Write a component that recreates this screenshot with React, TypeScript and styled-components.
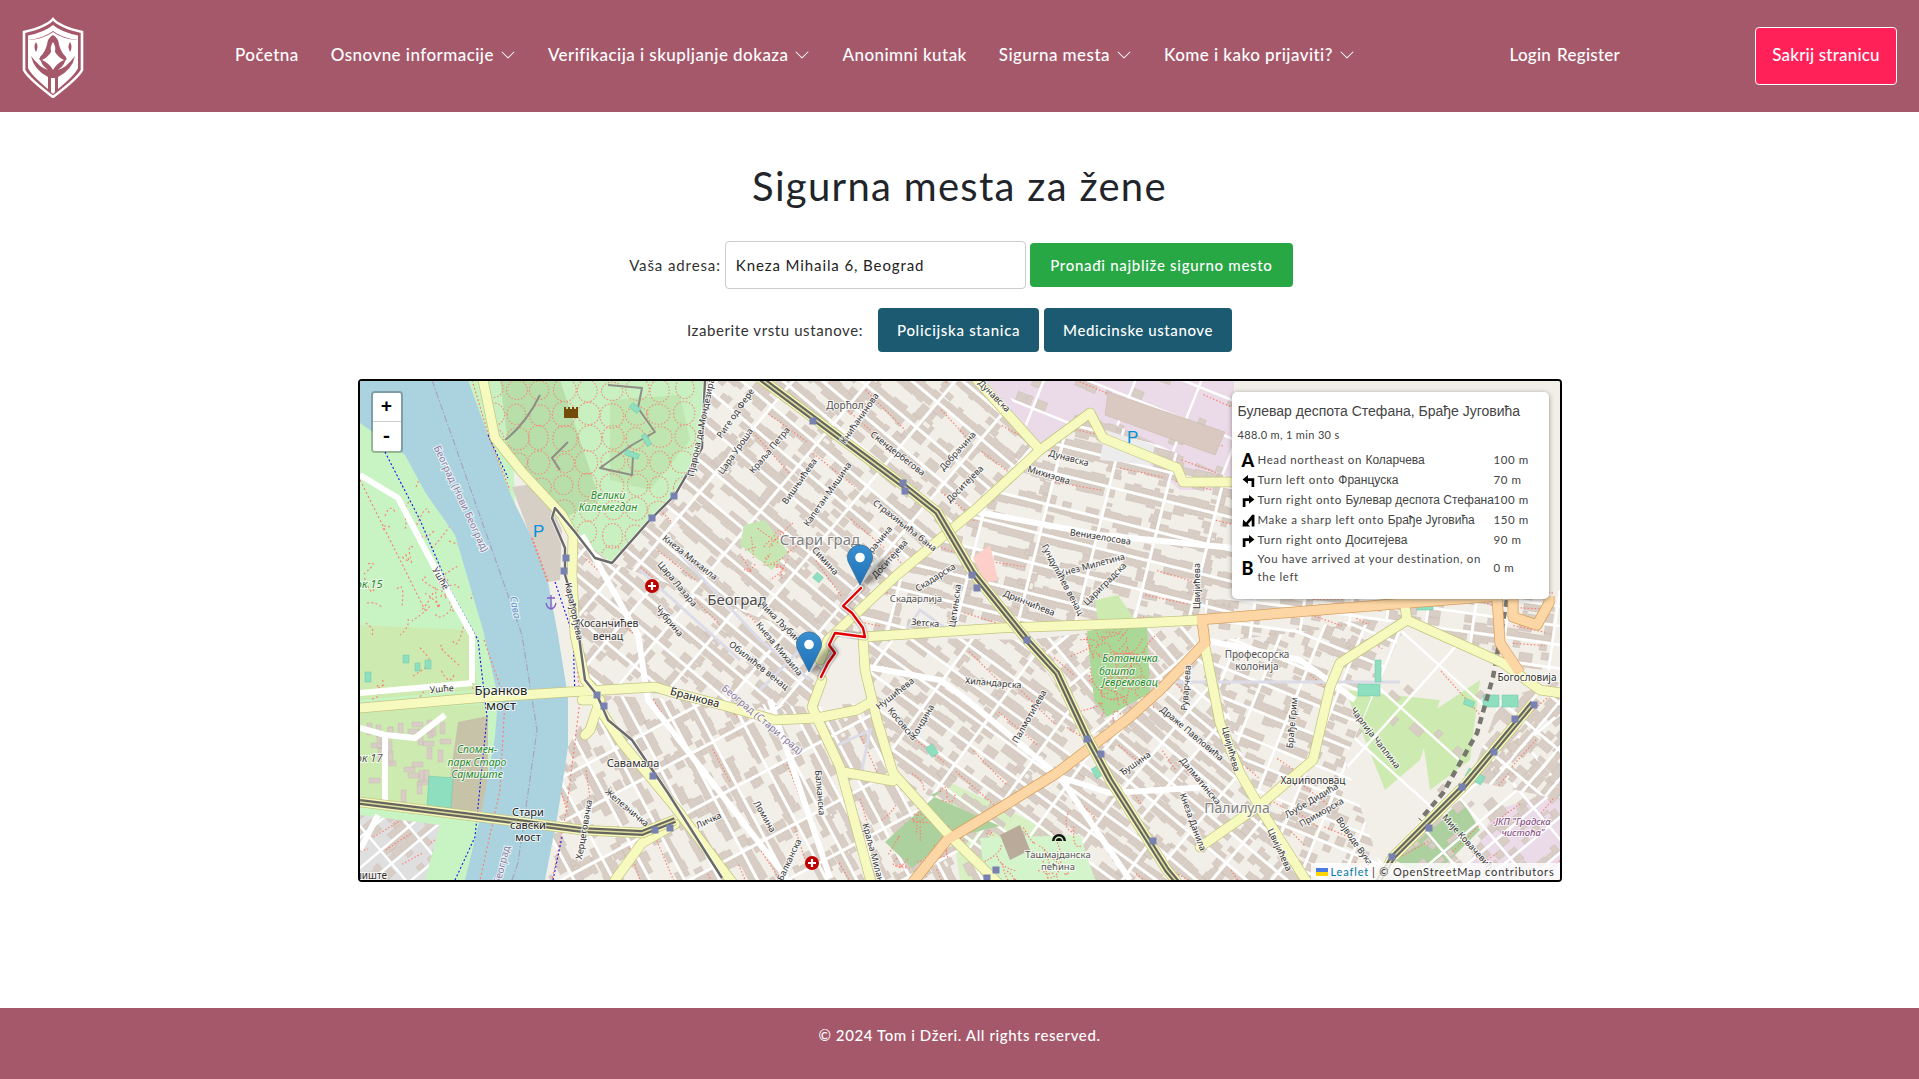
import React from 'react';
import styled, { createGlobalStyle } from 'styled-components';

const ROSE = '#a6586b';
const BODY_FONT = '"Lato", "Liberation Sans", sans-serif';
const CYR_FONT = '"Liberation Sans", sans-serif';

type Pt = [number, number];

const toPath = (pts: Pt[], close = false) =>
  'M' + pts.map(p => `${p[0]} ${p[1]}`).join('L') + (close ? 'Z' : '');

const rng = (seed: number) => () => {
  seed = (seed + 0x6d2b79f5) | 0;
  let t = Math.imul(seed ^ (seed >>> 15), 1 | seed);
  t = (t + Math.imul(t ^ (t >>> 7), 61 | t)) ^ t;
  return ((t ^ (t >>> 14)) >>> 0) / 4294967296;
};

interface District {
  poly: Pt[];
  angle: number;
  cw: number;
  ch: number;
  seed: number;
  fill?: number;
}

// one district of the city: a rotated street grid with buildings along the block edges
const buildDistrict = ({ poly, angle, cw, ch, seed, fill = 1 }: District) => {
  const r = rng(seed);
  const xs = poly.map(p => p[0]);
  const ys = poly.map(p => p[1]);
  const cx = (Math.min(...xs) + Math.max(...xs)) / 2;
  const cy = (Math.min(...ys) + Math.max(...ys)) / 2;
  const R = Math.hypot(Math.max(...xs) - cx, Math.max(...ys) - cy) + 30;
  const c = Math.cos((angle * Math.PI) / 180);
  const s = Math.sin((angle * Math.PI) / 180);
  const at = (u: number, v: number) =>
    `${(cx + u * c - v * s).toFixed(1)} ${(cy + u * s + v * c).toFixed(1)}`;
  const rect = (u0: number, v0: number, u1: number, v1: number) =>
    `M${at(u0, v0)}L${at(u1, v0)}L${at(u1, v1)}L${at(u0, v1)}Z`;

  const cuts = (size: number) => {
    const out: number[] = [];
    for (let p = -R; p < R; p += size * (0.75 + r() * 0.5)) out.push(p);
    return out;
  };
  const us = cuts(cw);
  const vs = cuts(ch);

  let buildings = '';
  let streets = '';
  let dots = '';
  us.forEach(u => { streets += `M${at(u, -R)}L${at(u, R)}`; });
  vs.forEach(v => { streets += `M${at(-R, v)}L${at(R, v)}`; });

  for (let i = 0; i < us.length - 1; i++) {
    for (let j = 0; j < vs.length - 1; j++) {
      const u0 = us[i] + 2;
      const u1 = us[i + 1] - 2;
      const v0 = vs[j] + 2;
      const v1 = vs[j + 1] - 2;
      for (let u = u0; u < u1 - 3; ) {
        const len = Math.min(4 + r() * 10, u1 - u);
        if (r() < 0.88 * fill) buildings += rect(u, v0, u + len, v0 + 4 + r() * 5);
        if (r() < 0.88 * fill) buildings += rect(u, v1, u + len, v1 - 4 - r() * 5);
        u += len + 0.8;
      }
      for (let v = v0 + 8; v < v1 - 10; ) {
        const len = 3 + r() * 6;
        if (r() < 0.75 * fill) buildings += rect(u0, v, u0 + 4 + r() * 5, v + len);
        if (r() < 0.75 * fill) buildings += rect(u1, v, u1 - 4 - r() * 5, v + len);
        v += len + 0.8;
      }
      if (r() < 0.3) {
        dots += `M${at(u0 + r() * 8, v0 + r() * 8)}L${at(u1 - r() * 8, v0 + r() * 12)}`;
      }
    }
  }
  return { poly, buildings, streets, dots };
};

const districts = [
  { poly: [[705, 380], [985, 380], [1040, 450], [977, 508], [897, 575], [820, 640], [612, 563], [675, 495], [702, 448]], angle: 40, cw: 56, ch: 30, seed: 11 },
  { poly: [[612, 563], [820, 640], [822, 680], [817, 718], [675, 693], [597, 695], [575, 640], [575, 535]], angle: 40, cw: 44, ch: 32, seed: 22 },
  { poly: [[597, 695], [812, 707], [871, 702], [893, 781], [947, 833], [997, 882], [545, 880], [568, 747]], angle: 62, cw: 52, ch: 30, seed: 33, fill: 0.9 },
  { poly: [[897, 575], [977, 508], [1040, 450], [1090, 413], [1234, 480], [1234, 622], [867, 637], [820, 640]], angle: 14, cw: 56, ch: 30, seed: 44 },
  { poly: [[867, 637], [1027, 640], [1087, 737], [1177, 882], [997, 882], [893, 773], [870, 700]], angle: 36, cw: 54, ch: 30, seed: 55 },
  { poly: [[1027, 640], [1197, 620], [1205, 643], [1130, 717], [1087, 737]], angle: 50, cw: 46, ch: 30, seed: 66 },
  { poly: [[1087, 737], [1130, 717], [1205, 643], [1257, 800], [1307, 882], [1177, 882]], angle: 40, cw: 40, ch: 26, seed: 77 },
  { poly: [[1205, 643], [1340, 622], [1407, 620], [1345, 760], [1385, 882], [1307, 882], [1257, 803]], angle: 22, cw: 40, ch: 28, seed: 88, fill: 0.72 },
  { poly: [[1407, 620], [1503, 665], [1440, 800], [1385, 882], [1345, 760]], angle: 42, cw: 74, ch: 60, seed: 91, fill: 0.16 },
  { poly: [[1440, 800], [1561, 700], [1561, 880], [1385, 880]], angle: -40, cw: 46, ch: 28, seed: 99, fill: 0.55 },
  { poly: [[1205, 600], [1561, 590], [1561, 672], [1503, 665], [1407, 620], [1205, 643]], angle: 8, cw: 42, ch: 22, seed: 110, fill: 0.6 },
  { poly: [[1500, 700], [1561, 680], [1561, 800], [1470, 780]], angle: -50, cw: 40, ch: 26, seed: 121 },
  { poly: [[360, 815], [440, 825], [425, 880], [360, 880]], angle: -40, cw: 34, ch: 22, seed: 132, fill: 0.7 },
  { poly: [[1090, 413], [1234, 480], [1234, 380], [1000, 380], [1040, 450]], angle: 22, cw: 70, ch: 46, seed: 154, fill: 0.3 },
].map(d => buildDistrict(d as District));

// red dotted footpaths scattered through the parks
const parkPaths = (seed: number, x0: number, y0: number, x1: number, y1: number, n: number) => {
  const r = rng(seed);
  let d = '';
  for (let i = 0; i < n; i++) {
    const x = x0 + r() * (x1 - x0);
    const y = y0 + r() * (y1 - y0);
    d += `M${x.toFixed(0)} ${y.toFixed(0)}q${(r() * 30 - 15).toFixed(0)} ${(r() * 30 - 15).toFixed(0)} ${(r() * 44 - 22).toFixed(0)} ${(r() * 44 - 22).toFixed(0)}`;
  }
  return d;
};

// the round lawns of Kalemegdan side by side, each ringed by a dotted path
const parkLoops = (seed: number, x0: number, y0: number, x1: number, y1: number, step: number) => {
  const r = rng(seed);
  let d = '';
  for (let y = y0; y < y1; y += step) {
    for (let x = x0; x < x1; x += step) {
      const cx = x + r() * 4;
      const cy = y + r() * 4;
      const rx = step * (0.38 + r() * 0.12);
      const ry = step * (0.38 + r() * 0.12);
      d += `M${(cx - rx).toFixed(1)} ${cy.toFixed(1)}a${rx.toFixed(1)} ${ry.toFixed(1)} 0 1 0 ${(rx * 2).toFixed(1)} 0a${rx.toFixed(1)} ${ry.toFixed(1)} 0 1 0 ${(-rx * 2).toFixed(1)} 0Z`;
    }
  }
  return d;
};

// scattered low buildings on the grass of Staro Sajmiste
const sajmisteHuts = (() => {
  const r = rng(17);
  let d = '';
  for (let i = 0; i < 34; i++) {
    const x = 362 + r() * 82;
    const y = 718 + r() * 78;
    const tall = r() > 0.5;
    d += `M${x.toFixed(0)} ${y.toFixed(0)}h${tall ? 5 : 11}v${tall ? 12 : 5}h${tall ? -5 : -11}Z`;
  }
  return d;
})();

const kalemegdan: Pt[] = [[483, 380], [705, 380], [702, 448], [675, 495], [612, 563], [575, 535], [522, 472], [495, 438]];
const river: Pt[] = [[360, 380], [468, 380], [488, 435], [512, 498], [532, 538], [548, 582], [558, 635], [568, 697], [568, 747], [558, 813], [545, 880], [465, 880], [482, 810], [495, 737], [498, 697], [483, 630], [455, 535], [425, 492], [405, 455], [360, 423]];
const pinkLand: Pt[] = [[985, 380], [1234, 380], [1234, 490], [1180, 490], [1090, 413], [1040, 450]];
const botanical: Pt[] = [[1087, 631], [1147, 622], [1150, 693], [1107, 717], [1094, 700]];

const yellowRoads: Pt[][] = [
  [[483, 380], [495, 438], [522, 472], [562, 515], [573, 535], [572, 575], [575, 635], [585, 680], [597, 694]],
  [[360, 708], [475, 698], [568, 692], [655, 687], [675, 693], [722, 705], [775, 720], [817, 718], [857, 710], [871, 702]],
  [[822, 680], [812, 707], [840, 767], [867, 867], [871, 882]],
  [[863, 637], [865, 670], [877, 720], [893, 773], [947, 833], [997, 882]],
  [[843, 772], [893, 781]],
  [[820, 660], [828, 640], [897, 575], [977, 508], [1040, 450], [1090, 413], [1103, 438], [1177, 468], [1183, 482], [1234, 482]],
  [[977, 380], [1040, 450]],
  [[863, 637], [1000, 628], [1140, 623], [1200, 620]],
  [[582, 700], [600, 700], [590, 730], [585, 735]],
  [[597, 705], [622, 743], [675, 807], [732, 882]],
  [[615, 880], [642, 843], [675, 824]],
  [[1205, 647], [1220, 723], [1240, 773], [1263, 813], [1307, 882]],
  [[1200, 847], [1260, 805], [1313, 760], [1330, 687], [1340, 663], [1407, 620], [1503, 663], [1540, 690], [1561, 693]],
  [[1407, 620], [1404, 600]],
];

const orangeRoads: Pt[][] = [
  [[1197, 620], [1407, 603], [1497, 596]],
  [[1202, 620], [1205, 643], [1160, 690], [1130, 717], [1057, 773], [997, 810], [947, 840], [913, 882]],
  [[1497, 596], [1500, 643], [1520, 673]],
  [[1513, 596], [1513, 617], [1537, 625], [1549, 603], [1549, 596]],
];

const railLines: Pt[][] = [
  [[760, 378], [903, 485], [937, 512], [973, 573], [1027, 640], [1057, 673], [1087, 737], [1110, 780], [1167, 870], [1177, 882]],
  [[360, 802], [465, 815], [582, 830], [642, 833], [675, 820]],
  [[1533, 703], [1463, 787], [1393, 857], [1378, 882]],
];

const tramLine: Pt[] = [[705, 380], [702, 448], [675, 495], [648, 522], [612, 563], [595, 558], [575, 532], [555, 508], [552, 518], [565, 548], [565, 575], [575, 608], [585, 680], [597, 695], [608, 720], [632, 740], [668, 793], [722, 878]];

const wideStreets: Pt[][] = [
  [[977, 512], [1100, 535], [1234, 548]],
  [[868, 667], [940, 680], [967, 700], [1060, 777], [1110, 793], [1210, 787]],
  [[582, 535], [638, 635], [648, 700], [775, 863], [790, 882]],
  [[360, 693], [472, 683]],
  [[360, 475], [398, 498], [435, 568], [472, 635], [472, 683]],
  [[1060, 777], [1130, 880]],
  [[770, 700], [830, 878]],
  [[1205, 640], [1300, 660], [1355, 700]],
  [[360, 850], [378, 815]],
  [[360, 728], [385, 735], [415, 738], [445, 715]],
  [[385, 735], [385, 800]],
];

const lilacWalks: Pt[][] = [
  [[665, 538], [760, 640], [810, 680]],
  [[640, 570], [740, 660]],
  [[800, 650], [760, 690]],
  [[905, 632], [920, 610], [945, 628]],
  [[838, 745], [870, 730], [862, 770]],
  [[1170, 682], [1400, 682]],
];

const stops: Pt[] = [[674, 496], [652, 518], [566, 558], [564, 571], [813, 421], [903, 483], [905, 491], [972, 575], [977, 588], [1027, 640], [1087, 739], [1101, 754], [1153, 841], [996, 870], [987, 878], [597, 695], [604, 706], [653, 776], [655, 830], [670, 828], [1534, 705], [1515, 719], [1494, 752], [1462, 787], [1429, 828], [1392, 857]];

const teal: [number, number, number, number, number][] = [
  [428, 777, 24, 30, 4], [415, 663, 5, 8, 0], [403, 655, 6, 8, 0], [425, 660, 6, 9, 0], [365, 672, 6, 10, 0],
  [814, 574, 8, 7, 40], [630, 405, 10, 6, 40], [625, 452, 14, 5, 20], [644, 434, 5, 12, -30], [1358, 684, 22, 12, 0], [1375, 660, 6, 22, 0], [1417, 598, 16, 12, 0],
  [1483, 695, 16, 12, 0], [1502, 695, 16, 12, 0], [1466, 772, 18, 9, 30], [928, 745, 8, 11, -35], [1093, 765, 14, 11, -30], [1464, 700, 10, 6, 20],
];

interface LabelData {
  t: string;
  x: number;
  y: number;
  a?: number;
  s?: number;
  c?: string;
  i?: boolean;
}

const STREET = '#333';
const AREA = '#555';
const GREEN = '#1f8a2a';
const ADMIN = '#8a7aa0';

const labels: LabelData[] = [
  { t: 'Стари град', x: 820, y: 545, s: 15, c: '#808080' },
  { t: 'Београд', x: 737, y: 605, s: 15, c: '#4a4a4a' },
  { t: 'Бранков', x: 501, y: 695, s: 13, c: '#222' },
  { t: 'мост', x: 501, y: 710, s: 13, c: '#222' },
  { t: 'Стари', x: 528, y: 816, s: 11, c: '#222' },
  { t: 'савски', x: 528, y: 829, s: 11, c: '#222' },
  { t: 'мост', x: 528, y: 841, s: 11, c: '#222' },
  { t: 'Бранкова', x: 694, y: 701, a: 15, s: 11, c: '#222' },
  { t: 'Савамала', x: 633, y: 767, s: 11, c: '#333' },
  { t: 'Косанчићев', x: 608, y: 627, s: 10.5, c: '#333' },
  { t: 'венац', x: 608, y: 640, s: 10.5, c: '#333' },
  { t: 'Велики', x: 608, y: 499, s: 10.5, c: GREEN, i: true },
  { t: 'Калемегдан', x: 608, y: 511, s: 10.5, c: GREEN, i: true },
  { t: 'Спомен-', x: 477, y: 753, s: 10.5, c: GREEN, i: true },
  { t: 'парк Старо', x: 477, y: 766, s: 10.5, c: GREEN, i: true },
  { t: 'Сајмиште', x: 477, y: 778, s: 10.5, c: GREEN, i: true },
  { t: 'блок 15', x: 363, y: 588, s: 11, c: GREEN, i: true },
  { t: 'блок 17', x: 363, y: 762, s: 11, c: '#555', i: true },
  { t: 'Ушће', x: 438, y: 580, a: 60, s: 8.5 },
  { t: 'Ушће', x: 442, y: 692, a: -5, s: 8.5 },
  { t: 'Београд (Нови Београд)', x: 458, y: 500, a: 65, s: 10, c: ADMIN },
  { t: 'Сава', x: 512, y: 608, a: 80, s: 10, c: '#5a90c8', i: true },
  { t: 'Карађорђева', x: 571, y: 612, a: 78, s: 9 },
  { t: 'Кнеза Михаила', x: 688, y: 560, a: 38, s: 8.5 },
  { t: 'Цара Лазара', x: 675, y: 586, a: 50, s: 8.5 },
  { t: 'Чубрина', x: 667, y: 623, a: 50, s: 8.5 },
  { t: 'Пјарона де Мондезира', x: 704, y: 428, a: -78, s: 8.5 },
  { t: 'Риге од Фере', x: 738, y: 415, a: -55, s: 8.5 },
  { t: 'Цара Уроша', x: 738, y: 453, a: -55, s: 8.5 },
  { t: 'Дорћол', x: 845, y: 409, s: 10, c: AREA },
  { t: 'Краља Петра', x: 772, y: 452, a: -50, s: 8.5 },
  { t: 'Вишњићева', x: 802, y: 483, a: -55, s: 8.5 },
  { t: 'Капетан Мишина', x: 830, y: 496, a: -55, s: 8.5 },
  { t: 'Книћанинова', x: 862, y: 420, a: -55, s: 8.5 },
  { t: 'Скендербегова', x: 896, y: 456, a: 38, s: 8.5 },
  { t: 'Добрачина', x: 960, y: 453, a: -48, s: 8.5 },
  { t: 'Дунавска', x: 992, y: 398, a: 45, s: 8.5 },
  { t: 'Дунавска', x: 1068, y: 461, a: 15, s: 8.5 },
  { t: 'Михизова', x: 1048, y: 478, a: 17, s: 8.5 },
  { t: 'Доситејева', x: 967, y: 486, a: -45, s: 8.5 },
  { t: 'Страхињића бана', x: 903, y: 528, a: 38, s: 8.5 },
  { t: 'Добрачина', x: 877, y: 548, a: -50, s: 8.5 },
  { t: 'Доситејева', x: 892, y: 561, a: -48, s: 8.5 },
  { t: 'Венизелосова', x: 1100, y: 540, a: 9, s: 9 },
  { t: 'Кнез Милетина', x: 1093, y: 568, a: -15, s: 8.5 },
  { t: 'Гундулићев венац', x: 1060, y: 581, a: 62, s: 8.5 },
  { t: 'Цариградска', x: 1107, y: 586, a: -45, s: 8.5 },
  { t: 'Дринчићева', x: 1028, y: 606, a: 22, s: 8.5 },
  { t: 'Скадарска', x: 937, y: 580, a: -32, s: 8.5 },
  { t: 'Скадарлија', x: 916, y: 602, s: 9.5, c: AREA },
  { t: 'Зетска', x: 925, y: 626, a: 5, s: 8.5 },
  { t: 'Цетињска', x: 958, y: 606, a: -82, s: 8.5 },
  { t: 'Хиландарска', x: 993, y: 686, a: 5, s: 8.5 },
  { t: 'Нушићева', x: 897, y: 696, a: -38, s: 8.5 },
  { t: 'Косовска', x: 900, y: 726, a: 50, s: 8.5 },
  { t: 'Кондина', x: 925, y: 723, a: -60, s: 8.5 },
  { t: 'Палмотићева', x: 1032, y: 718, a: -60, s: 8.5 },
  { t: 'Симина', x: 823, y: 563, a: 48, s: 8.5 },
  { t: 'Чика Љубина', x: 780, y: 626, a: 45, s: 8.5 },
  { t: 'Кнеза Михаила', x: 777, y: 651, a: 50, s: 8.5 },
  { t: 'Обилићев венац', x: 757, y: 668, a: 38, s: 8.5 },
  { t: 'Ботаничка', x: 1130, y: 662, s: 10.5, c: GREEN, i: true },
  { t: 'башта', x: 1117, y: 675, s: 10.5, c: GREEN, i: true },
  { t: 'Јевремовац', x: 1130, y: 686, s: 10.5, c: GREEN, i: true },
  { t: 'Балканска', x: 817, y: 793, a: 85, s: 8.5 },
  { t: 'Балканска', x: 792, y: 861, a: -65, s: 8.5 },
  { t: 'Краља Милана', x: 871, y: 856, a: 75, s: 9 },
  { t: 'Ташмајданска', x: 1058, y: 858, s: 9.5, c: AREA },
  { t: 'пећина', x: 1058, y: 870, s: 9.5, c: AREA },
  { t: 'Ђушина', x: 1137, y: 766, a: -35, s: 8.5 },
  { t: 'Драже Павловића', x: 1190, y: 736, a: 40, s: 8.5 },
  { t: 'Далматинска', x: 1198, y: 783, a: 50, s: 8.5 },
  { t: 'Кнеза Данила', x: 1190, y: 823, a: 70, s: 8.5 },
  { t: 'Професорска', x: 1257, y: 658, s: 10, c: AREA },
  { t: 'колонија', x: 1257, y: 670, s: 10, c: AREA },
  { t: 'Руварчева', x: 1189, y: 688, a: -85, s: 8.5 },
  { t: 'Цвијићева', x: 1228, y: 750, a: 75, s: 9 },
  { t: 'Цвијићева', x: 1200, y: 586, a: -90, s: 8.5 },
  { t: 'Брађе Грим', x: 1295, y: 723, a: -85, s: 8.5 },
  { t: 'Чарлија Чаплина', x: 1373, y: 740, a: 52, s: 8.5 },
  { t: 'Хаџипоповац', x: 1313, y: 784, s: 10, c: '#333' },
  { t: 'Богословија', x: 1527, y: 681, s: 10, c: '#333' },
  { t: 'Палилула', x: 1237, y: 813, s: 14, c: '#808080' },
  { t: 'Цвијићева', x: 1277, y: 851, a: 65, s: 9 },
  { t: 'Љубе Дидића', x: 1313, y: 803, a: -30, s: 8.5 },
  { t: 'Приморска', x: 1323, y: 815, a: -30, s: 8.5 },
  { t: 'Војводе Вука', x: 1352, y: 843, a: 55, s: 8.5 },
  { t: 'Мије Ковачевића', x: 1467, y: 846, a: 48, s: 8.5 },
  { t: 'ЈКП "Градска', x: 1523, y: 825, s: 9.5, c: '#7a3f7a', i: true },
  { t: 'чистоћа"', x: 1523, y: 836, s: 9.5, c: '#7a3f7a', i: true },
  { t: 'Железничка', x: 625, y: 810, a: 40, s: 8.5 },
  { t: 'Херцеговачка', x: 587, y: 830, a: -80, s: 8.5 },
  { t: 'Личка', x: 710, y: 823, a: -25, s: 8.5 },
  { t: 'Ломина', x: 762, y: 818, a: 60, s: 8.5 },
  { t: 'шиште', x: 370, y: 879, s: 10, c: '#333' },
  { t: 'Београд (Стари град)', x: 760, y: 722, a: 40, s: 10, c: ADMIN },
  { t: 'Београд', x: 505, y: 866, a: -75, s: 10, c: ADMIN },
];

const GlobalStyle = createGlobalStyle`
  html, body { margin: 0; padding: 0; background: #fff; }
  body { font-family: ${BODY_FONT}; color: #212529; }
  * { box-sizing: border-box; }
`;

const Page = styled.div`
  min-height: 1079px;
  display: flex;
  flex-direction: column;
`;

const NavBar = styled.header`
  height: 112px;
  flex: none;
  background: ${ROSE};
  display: flex;
  align-items: center;
  padding: 0 22px 0 20px;
  color: #fff;
`;

const LogoMark = styled.svg`
  width: 70px;
  height: 84px;
  flex: none;
`;

const NavLinks = styled.nav`
  display: flex;
  align-items: center;
  gap: 32px;
  margin-left: 145px;
  padding-bottom: 3px;
`;

const NavLink = styled.a`
  display: inline-flex;
  align-items: center;
  gap: 6px;
  font-size: 17px;
  letter-spacing: 0.45px;
  font-weight: 500;
  white-space: nowrap;
  color: #fff;
`;

const Chevron = styled.svg`
  width: 16px;
  height: 16px;
  fill: #fff;
  flex: none;
`;

const AuthLinks = styled.div`
  margin-left: auto;
  padding-bottom: 3px;
  display: flex;
  gap: 6px;
  font-size: 17px;
  letter-spacing: 0.25px;
  font-weight: 500;
`;

const HideButton = styled.button`
  width: 142px;
  height: 58px;
  margin-left: 135px;
  padding: 0 0 3px;
  background: #ff2158;
  border: 1px solid #fff;
  border-radius: 4px;
  color: #fff;
  font: 500 17px ${BODY_FONT};
  letter-spacing: 0.2px;
`;

const Main = styled.main`
  flex: 1;
  display: flex;
  flex-direction: column;
  align-items: center;
`;

const Title = styled.h1`
  margin: 52px 0 0;
  height: 45px;
  line-height: 45px;
  font-size: 40px;
  font-weight: 400;
  letter-spacing: 1.3px;
  color: #212529;
`;

const FormRow = styled.div<{ $top: number; $shift?: number }>`
  display: flex;
  align-items: center;
  justify-content: center;
  margin-top: ${p => p.$top}px;
  padding-left: ${p => p.$shift ?? 0}px;
  height: 48px;
  font-size: 15px;
`;

const FieldLabel = styled.label<{ $gap: number; $spacing: number }>`
  margin-right: ${p => p.$gap}px;
  letter-spacing: ${p => p.$spacing}px;
  color: #333;
  white-space: nowrap;
`;

const AddressInput = styled.input`
  width: 301px;
  height: 48px;
  border: 1px solid #ccc;
  border-radius: 4px;
  padding: 0 10px;
  font: 400 15px ${BODY_FONT};
  letter-spacing: 0.9px;
  color: #222;
  outline: none;
`;

const ActionButton = styled.button<{ $color: string; $width: number; $gap: number; $spacing: number }>`
  width: ${p => p.$width}px;
  height: 44px;
  margin-left: ${p => p.$gap}px;
  padding: 0;
  background: ${p => p.$color};
  border: 0;
  border-radius: 4px;
  color: #fff;
  font: 500 15px ${BODY_FONT};
  letter-spacing: ${p => p.$spacing}px;
`;

const MapFrame = styled.div`
  position: relative;
  width: 1204px;
  height: 503px;
  margin-top: 25px;
  border: 2px solid #000;
  border-radius: 4px;
  overflow: hidden;
  background: #f2efe9;
`;

const MapCanvas = styled.svg`
  display: block;
  width: 1200px;
  height: 499px;
`;

const MapLabel = styled.text<{ $size: number; $color: string; $italic?: boolean }>`
  font-family: "Noto Sans", "DejaVu Sans", sans-serif;
  font-size: ${p => p.$size}px;
  font-style: ${p => (p.$italic ? 'italic' : 'normal')};
  fill: ${p => p.$color};
  stroke: rgba(255, 255, 255, 0.75);
  stroke-width: 2px;
  paint-order: stroke;
  text-anchor: middle;
`;

const ZoomBar = styled.div`
  position: absolute;
  left: 11px;
  top: 10px;
  width: 32px;
  border: 2px solid rgba(0, 0, 0, 0.25);
  border-radius: 4px;
  background-clip: padding-box;
`;

const ZoomButton = styled.a<{ $first?: boolean }>`
  display: flex;
  align-items: center;
  justify-content: center;
  width: 28px;
  height: 29px;
  background: #fff;
  color: #000;
  font: bold 19px "Liberation Mono", monospace;
  border-bottom: ${p => (p.$first ? '1px solid #ccc' : '0')};
  border-radius: ${p => (p.$first ? '2px 2px 0 0' : '0 0 2px 2px')};
`;

const RoutePanel = styled.aside`
  position: absolute;
  left: 872px;
  top: 11px;
  width: 317px;
  height: 207px;
  padding: 9px 6px 0;
  background: #fff;
  border-radius: 5px;
  box-shadow: 0 1px 5px rgba(0, 0, 0, 0.4);
  color: #444;
`;

const RouteTitle = styled.div`
  font: 400 14px/20px ${CYR_FONT};
  color: #444;
  white-space: nowrap;
`;

const RouteSummary = styled.div`
  margin-top: 7px;
  font-size: 11px;
  line-height: 14px;
  letter-spacing: 0.35px;
`;

const RouteRows = styled.div`
  margin-top: 8px;
  display: grid;
  grid-template-columns: 20px 236px 1fr;
  grid-auto-rows: minmax(20px, auto);
  align-items: center;
  font-size: 11.5px;
  line-height: 18px;
  letter-spacing: 0.6px;
`;

const Cyr = styled.span`
  font-family: ${CYR_FONT};
  letter-spacing: 0;
  font-size: 12px;
`;

const StepLetter = styled.span`
  font: 900 18px/18px "Lato", sans-serif;
  color: #000;
  padding-left: 4px;
`;

const StepIcon = styled.svg`
  width: 13px;
  height: 13px;
  margin-left: 4px;
  display: block;
`;

const StepText = styled.span<{ $clip?: boolean }>`
  white-space: ${p => (p.$clip ? 'nowrap' : 'normal')};
`;

const StepDistance = styled.span`
  letter-spacing: 0.6px;
`;

const Attribution = styled.div`
  position: absolute;
  right: 0;
  bottom: 0;
  height: 17px;
  display: flex;
  align-items: center;
  gap: 3px;
  padding: 0 5px;
  background: rgba(255, 255, 255, 0.8);
  font-size: 11px;
  letter-spacing: 0.85px;
  color: #333;
  white-space: nowrap;
`;

const LeafletLink = styled.a`
  color: #0078a8;
`;

const Footer = styled.footer`
  height: 71px;
  flex: none;
  background: ${ROSE};
  color: #fff;
  display: flex;
  justify-content: center;
  padding-top: 18px;
  font-size: 15px;
  font-weight: 500;
  letter-spacing: 0.6px;
`;

const Logo = () => (
  <LogoMark viewBox="20 12 70 84">
    <path d="M53 17 Q60 25 82 30 L82 68 Q78 76 53 95 Q28 76 24 68 L24 30 Q46 25 53 17Z" fill="none" stroke="#fff" strokeWidth="2.6" />
    <path d="M53 23 Q61 30 78 33.5 L78 38 Q62 36 53 29 Q44 36 28 38 L28 33.5 Q45 30 53 23Z" fill="#fff" />
    <path d="M28 38 Q44 37 53 30 Q62 37 78 38 L78 66 Q75 73 58 87 L58 75 Q72 68 75 54 Q66 66 58 68 Q66 62 66 55 Q60 50 58 38 Q53 32 48 38 Q46 50 40 55 Q40 62 48 68 Q40 66 31 54 Q34 68 48 75 L48 87 Q31 73 28 66Z" fill="#fff" />
    <path d="M36 40 Q39 44 36 50 Q33 45 36 40Z M70 40 Q73 45 70 50 Q67 44 70 40Z" fill={ROSE} />
    <path d="M53 33 Q58 35 58 43 Q60 50 67 57 Q60 62 55 68 L53 72 L51 68 Q46 62 39 57 Q46 50 48 43 Q48 35 53 33Z" fill={ROSE} />
    <path d="M53 40 Q56 44 55 50 Q58 55 64 58 Q57 61 53 68 Q49 61 42 58 Q48 55 51 50 Q50 44 53 40Z" fill="#fff" />
    <path d="M51 76 L55 76 L55 90 L53 92 L51 90Z" fill="#fff" />
  </LogoMark>
);

const DownCaret = () => (
  <Chevron viewBox="0 0 16 16">
    <path d="M1.646 4.646a.5.5 0 0 1 .708 0L8 10.293l5.646-5.647a.5.5 0 0 1 .708.708l-6 6a.5.5 0 0 1-.708 0l-6-6a.5.5 0 0 1 0-.708z" />
  </Chevron>
);

const LeftArrow = () => (
  <StepIcon viewBox="0 0 12 12"><path d="M5.5 1 L0.5 5 L5.5 9 V6.5 H8.8 V12 H11.3 V4 H5.5Z" /></StepIcon>
);

const RightArrow = () => (
  <StepIcon viewBox="0 0 12 12"><path d="M6.5 1 L11.5 5 L6.5 9 V6.5 H3.2 V12 H0.7 V4 H6.5Z" /></StepIcon>
);

const SharpLeftArrow = () => (
  <StepIcon viewBox="0 0 12 12"><path d="M0.5 11.5 H7.5 L5.4 9.4 L9 5.6 V11.5 H11.5 V0.8 H9.4 L3.8 7.8 L1 5Z" /></StepIcon>
);

const MarkerPin = ({ x, y }: { x: number; y: number }) => (
  <g transform={`translate(${x - 12.5} ${y - 40})`}>
    <path d="M12.5 40 L25 20 L36 12 L42 20 L26 38Z" fill="rgba(0,0,0,0.32)" filter="url(#pinBlur)" />
    <path d="M12.5 0C5.6 0 0 5.6 0 12.5c0 2.4.7 4.6 1.9 6.5L12.5 40l10.6-21C24.3 17.1 25 14.9 25 12.5 25 5.6 19.4 0 12.5 0z" fill="url(#pinFill)" stroke="#2e6c97" strokeWidth="0.8" />
    <circle cx="12.5" cy="12.5" r="4.8" fill="#fff" />
  </g>
);

const CityMap = () => (
  <MapCanvas viewBox="360 381 1200 499">
    <defs>
      {districts.map((d, i) => (
        <clipPath key={i} id={`district${i}`}>
          <path d={toPath(d.poly, true)} />
        </clipPath>
      ))}
      <clipPath id="kalemegdanClip"><path d={toPath(kalemegdan, true)} /></clipPath>
      <linearGradient id="pinFill" x1="0" y1="0" x2="0" y2="1">
        <stop offset="0" stopColor="#3a8fd0" />
        <stop offset="1" stopColor="#1f70b4" />
      </linearGradient>
      <filter id="pinBlur"><feGaussianBlur stdDeviation="2" /></filter>
    </defs>

    <rect x="360" y="381" width="1200" height="499" fill="#f2efe9" />

    {/* left bank */}
    <path d="M360 380H510L530 880H360Z" fill="#c8f4c4" />
    <path d="M360 625L470 630L478 690L360 700Z" fill="#cdebb0" />
    <path d="M360 712L485 704L485 812L360 800Z" fill="#cdebb0" />
    <path d={sajmisteHuts} fill="#d8cec5" stroke="#c4b6ab" strokeWidth="0.4" />
    <path d="M458 722L488 716L488 815L445 812Z" fill="#c6c3a9" />
    <path d="M360 815L440 825L425 880H360Z" fill="#e0dfdf" />
    <path d={parkPaths(21, 362, 480, 480, 630, 36)} fill="none" stroke="#fa8072" strokeWidth="1.1" strokeDasharray="2 2.4" />
    <path d={parkPaths(23, 362, 630, 475, 700, 10)} fill="none" stroke="#fa8072" strokeWidth="1.1" strokeDasharray="2 2.4" />

    {/* districts */}
    <path d={toPath(pinkLand, true)} fill="#ebdbe8" />
    <path d="M1495 810L1561 790V880H1460Z" fill="#ebdbe8" />
    <path d="M1345 690L1440 700L1420 760L1385 790Z" fill="#cdebb0" />
    <path d="M1420 720L1480 680L1470 760L1430 790Z" fill="#cdebb0" />
    <path d="M1395 860L1462 800L1480 830L1430 880Z" fill="#add19e" />
    <path d="M945 780L1060 835L1100 880H960Z" fill="#d8f0c4" />
    {districts.map((d, i) => (
      <g key={i} clipPath={`url(#district${i})`}>
        <path d={d.buildings} fill="#d8cec5" stroke="#c4b6ab" strokeWidth="0.4" />
        <path d={d.dots} fill="none" stroke="#fa8072" strokeWidth="1.2" strokeDasharray="1.5 2" />
        <path d={d.streets} fill="none" stroke="#fff" strokeWidth="2.5" />
      </g>
    ))}

    {/* parks over the grid */}
    <path d={toPath(kalemegdan, true)} fill="#c8f0c0" />
    <g clipPath="url(#kalemegdanClip)">
      <path d="M500 380H560L600 500L560 520L510 460Z" fill="#b8deaa" />
      <path d="M610 400L680 395L690 440L650 490L610 480Z" fill="#bfe6b0" />
      <path d={parkLoops(3, 490, 388, 705, 565, 24)} fill="none" stroke="#fa8072" strokeOpacity="0.85" strokeWidth="1.2" strokeDasharray="1.5 1.8" />
      <path d="M608 385L642 388L638 408L655 432L632 445L600 468L632 475L633 455" fill="none" stroke="#8e8e86" strokeWidth="2" strokeLinejoin="round" />
      <path d="M568 442L552 458L560 470M540 395Q525 425 505 440" fill="none" stroke="#8e8e86" strokeWidth="2" />
    </g>
    <path d="M512 487L540 483L562 530L560 580L548 582L530 535Z" fill="#d6cfc6" />
    <path d={toPath(botanical, true)} fill="#a9d897" />
    <path d={parkPaths(5, 1087, 625, 1147, 715, 46)} fill="none" stroke="#fa8072" strokeWidth="1.2" strokeDasharray="1.5 1.8" />
    <path d="M1000 826L930 795L942 790L885 842L912 868L950 838Z" fill="#add19e" />
    <path d={parkPaths(9, 885, 790, 945, 870, 20)} fill="none" stroke="#fa8072" strokeWidth="1.2" strokeDasharray="1.5 1.8" />
    <path d="M980 838L1080 835L1095 880H985Z" fill="#d4f4cc" />
    <path d={parkPaths(7, 985, 830, 1090, 880, 22)} fill="none" stroke="#fa8072" strokeWidth="1.2" strokeDasharray="1.5 1.8" />
    <path d="M1000 835L1020 825L1030 850L1010 860Z" fill="#b9aa9a" />
    <path d="M973 557L990 545L998 580L985 583Z" fill="#fccfc8" />
    <path d="M1095 600L1118 595L1135 620L1098 622Z" fill="#cdebb0" />
    <path d="M744 525L765 520L788 552L772 570L740 545Z" fill="#c6e6b4" />
    <path d={parkPaths(4, 740, 520, 790, 570, 14)} fill="none" stroke="#fa8072" strokeWidth="1.1" strokeDasharray="1.5 1.8" />
    <path d="M1108 392L1225 432L1215 455L1105 415Z" fill="#d9c9c0" stroke="#c4b6ab" strokeWidth="0.5" />
    <path d="M1105 430L1155 445L1150 465L1100 460Z" fill="#ececec" />

    {/* water */}
    <path d={toPath(river, true)} fill="#aad3df" />
    <path d="M432 380L522 635L537 730L518 863L512 880" fill="none" stroke="#a9a3c0" strokeWidth="1.2" strokeDasharray="7 2 1.5 2" />
    <path d="M532 538L548 582" fill="none" stroke="#fa8072" strokeWidth="2" strokeDasharray="2 2" />
    <path d="M472 380L490 440L510 490" fill="none" stroke="#fa8072" strokeWidth="1.2" strokeDasharray="2 2" />
    <path d="M575 640L580 700L574 750L566 813L552 880M484 640L505 700L500 790L480 880M360 480L425 610" fill="none" stroke="#fa8072" strokeWidth="1.2" strokeDasharray="2 2.5" />
    <path d="M385 452L420 520L450 590L478 640L487 717L475 837L455 880M488 435L508 478M555 582L573 635L575 697M562 837L553 880" fill="none" stroke="#1212ee" strokeWidth="1.1" strokeDasharray="2 2.2" />

    {/* streets */}
    {lilacWalks.map((w, i) => (
      <path key={i} d={toPath(w)} fill="none" stroke="#dcdce8" strokeWidth="3" />
    ))}
    {wideStreets.map((w, i) => (
      <path key={i} d={toPath(w)} fill="none" stroke="#fff" strokeWidth="6" strokeLinejoin="round" />
    ))}
    {teal.map(([x, y, w, h, a], i) => (
      <rect key={i} x={x} y={y} width={w} height={h} fill="#8ddfc0" stroke="#6cc6a6" strokeWidth="0.5" transform={`rotate(${a} ${x + w / 2} ${y + h / 2})`} />
    ))}

    <path d="M1507 600L1493 677L1477 733L1443 793L1420 820" fill="none" stroke="#77776f" strokeWidth="4.5" strokeDasharray="7 5" />

    {yellowRoads.map((r, i) => (
      <path key={i} d={toPath(r)} fill="none" stroke="#c3c680" strokeWidth="10.5" strokeLinejoin="round" strokeLinecap="round" />
    ))}
    {orangeRoads.map((r, i) => (
      <path key={i} d={toPath(r)} fill="none" stroke="#d9a15f" strokeWidth="11" strokeLinejoin="round" />
    ))}
    {yellowRoads.map((r, i) => (
      <path key={i} d={toPath(r)} fill="none" stroke="#f7fabf" strokeWidth="9" strokeLinejoin="round" strokeLinecap="round" />
    ))}
    {orangeRoads.map((r, i) => (
      <path key={i} d={toPath(r)} fill="none" stroke="#fcd6a4" strokeWidth="9.5" strokeLinejoin="round" />
    ))}

    <path d={toPath(tramLine)} fill="none" stroke="#fff" strokeWidth="4" strokeLinejoin="round" opacity="0.7" />
    <path d={toPath(tramLine)} fill="none" stroke="#6a6a6a" strokeWidth="2.4" strokeLinejoin="round" />
    {railLines.map((r, i) => (
      <g key={i} fill="none" strokeLinejoin="round">
        <path d={toPath(r)} stroke="#c3c680" strokeWidth="10.5" />
        <path d={toPath(r)} stroke="#f7fabf" strokeWidth="9" />
        <path d={toPath(r)} stroke="#66665e" strokeWidth="6" />
        <path d={toPath(r)} stroke="#dcdca0" strokeWidth="1.6" />
      </g>
    ))}

    {stops.map(([x, y], i) => (
      <rect key={i} x={x - 3.5} y={y - 3.5} width="7" height="7" fill="#7981b1" />
    ))}

    {/* point symbols */}
    <path d="M564 407h2v2h2v-2h2v2h2v-2h2v2h2v-2h2v11h-14Z" fill="#734a08" />
    <text x="533" y="537" fontFamily="Liberation Sans" fontSize="17" fill="#0092da">P</text>
    <text x="1127" y="443" fontFamily="Liberation Sans" fontSize="17" fill="#0092da">P</text>
    <path d="M551 595v13M547 598h8M546 603q1 5 5 6q4-1 5-6" fill="none" stroke="#8461c4" strokeWidth="1.3" />
    {[[652, 586], [812, 863]].map(([x, y], i) => (
      <g key={i}>
        <circle cx={x} cy={y} r="7" fill="#bf0000" />
        <path d={`M${x - 4} ${y}h8M${x} ${y - 4}v8`} stroke="#fff" strokeWidth="2.2" />
      </g>
    ))}
    <path d="M1052 841a7 7 0 0 1 14 0h-2.5a4.5 4.5 0 0 0-9 0Z M1056 841a3 3 0 0 1 6 0Z" fill="#111" />

    {labels.map((l, i) => (
      <MapLabel
        key={i}
        x={l.x}
        y={l.y}
        $size={l.s === 8.5 ? 9 : l.s ?? 9}
        $color={l.c ?? STREET}
        $italic={l.i}
        transform={l.a ? `rotate(${l.a} ${l.x} ${l.y})` : undefined}
      >
        {l.t}
      </MapLabel>
    ))}

    {/* route */}
    {(() => {
      const route = toPath([[861, 588], [843, 606], [852, 613], [863, 628], [865, 637], [835, 633], [829, 645], [835, 653], [828, 663], [821, 677]]);
      return (
        <g fill="none" strokeLinejoin="round" strokeLinecap="round">
          <path d={route} stroke="#000" strokeOpacity="0.15" strokeWidth="7.5" />
          <path d={route} stroke="#fff" strokeOpacity="0.85" strokeWidth="5" />
          <path d={route} stroke="#e30000" strokeWidth="2.4" />
        </g>
      );
    })()}
    <MarkerPin x={860} y={585} />
    <MarkerPin x={809} y={672} />
  </MapCanvas>
);

const App = () => (
  <Page>
    <GlobalStyle />
    <NavBar>
      <Logo />
      <NavLinks>
        <NavLink>Početna</NavLink>
        <NavLink>Osnovne informacije <DownCaret /></NavLink>
        <NavLink>Verifikacija i skupljanje dokaza <DownCaret /></NavLink>
        <NavLink>Anonimni kutak</NavLink>
        <NavLink>Sigurna mesta <DownCaret /></NavLink>
        <NavLink>Kome i kako prijaviti? <DownCaret /></NavLink>
      </NavLinks>
      <AuthLinks>
        <span>Login</span>
        <span>Register</span>
      </AuthLinks>
      <HideButton>Sakrij stranicu</HideButton>
    </NavBar>
    <Main>
      <Title>Sigurna mesta za žene</Title>
      <FormRow $top={32} $shift={3}>
        <FieldLabel $gap={4} $spacing={0.9}>Vaša adresa:</FieldLabel>
        <AddressInput defaultValue="Kneza Mihaila 6, Beograd" />
        <ActionButton $color="#28a745" $width={263} $gap={4} $spacing={0.7}>Pronađi najbliže sigurno mesto</ActionButton>
      </FormRow>
      <FormRow $top={17}>
        <FieldLabel $gap={15} $spacing={0.6}>Izaberite vrstu ustanove:</FieldLabel>
        <ActionButton $color="#1c5a72" $width={161} $gap={0} $spacing={0.7}>Policijska stanica</ActionButton>
        <ActionButton $color="#1c5a72" $width={188} $gap={5} $spacing={0.6}>Medicinske ustanove</ActionButton>
      </FormRow>
      <MapFrame>
        <CityMap />
        <ZoomBar>
          <ZoomButton $first>+</ZoomButton>
          <ZoomButton>-</ZoomButton>
        </ZoomBar>
        <RoutePanel>
          <RouteTitle>Булевар деспота Стефана, Брађе Југовића</RouteTitle>
          <RouteSummary>488.0 m, 1 min 30 s</RouteSummary>
          <RouteRows>
            <StepLetter>A</StepLetter>
            <StepText>Head northeast on <Cyr>Коларчева</Cyr></StepText>
            <StepDistance>100 m</StepDistance>
            <LeftArrow />
            <StepText>Turn left onto <Cyr>Француска</Cyr></StepText>
            <StepDistance>70 m</StepDistance>
            <RightArrow />
            <StepText $clip>Turn right onto <Cyr>Булевар деспота Стефана</Cyr></StepText>
            <StepDistance>100 m</StepDistance>
            <SharpLeftArrow />
            <StepText>Make a sharp left onto <Cyr>Брађе Југовића</Cyr></StepText>
            <StepDistance>150 m</StepDistance>
            <RightArrow />
            <StepText>Turn right onto <Cyr>Доситејева</Cyr></StepText>
            <StepDistance>90 m</StepDistance>
            <StepLetter>B</StepLetter>
            <StepText>You have arrived at your destination, on the left</StepText>
            <StepDistance>0 m</StepDistance>
          </RouteRows>
        </RoutePanel>
        <Attribution>
          <svg width="12" height="8" viewBox="0 0 12 8">
            <rect width="12" height="4" fill="#4c7be1" />
            <rect y="4" width="12" height="4" fill="#ffd500" />
          </svg>
          <LeafletLink>Leaflet</LeafletLink>
          <span>| © OpenStreetMap contributors</span>
        </Attribution>
      </MapFrame>
    </Main>
    <Footer>© 2024 Tom i Džeri. All rights reserved.</Footer>
  </Page>
);

export default App;
